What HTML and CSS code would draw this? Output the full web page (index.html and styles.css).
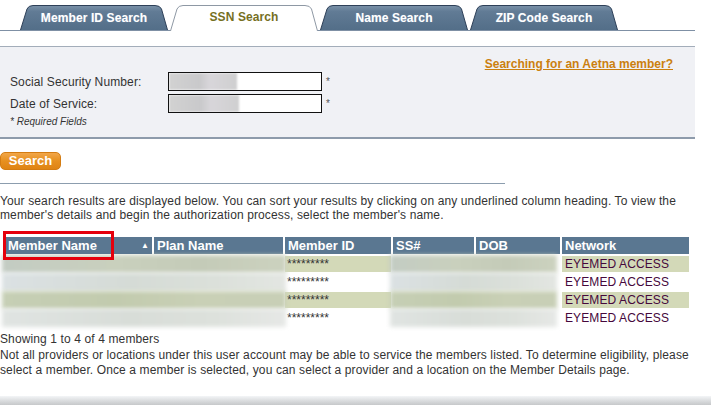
FILE: index.html
```html
<!DOCTYPE html>
<html>
<head>
<meta charset="utf-8">
<link rel="stylesheet" href="styles.css">
</head>
<body>
<div class="tabs">
  <div class="tab">
    <svg class="tab-bg" viewBox="0 0 148 25" preserveAspectRatio="none">
      <defs>
        <linearGradient id="tg" x1="0" y1="0" x2="0" y2="1">
          <stop offset="0" stop-color="#7a91a8"/>
          <stop offset="0.25" stop-color="#617b95"/>
          <stop offset="1" stop-color="#536e88"/>
        </linearGradient>
      </defs>
      <path d="M0.5 25 L7 4 Q8.5 0.5 13 0.5 L135 0.5 Q140 0.5 141.5 4 L147.5 25" fill="url(#tg)" stroke="#2e4058" stroke-width="1"/>
    </svg>
    <span class="tab-label">Member ID Search</span>
  </div>
  <div class="tab active">
    <svg class="tab-bg" viewBox="0 0 148 26" preserveAspectRatio="none">
      <path d="M0.5 26 L7 4 Q8.5 0.5 13 0.5 L135 0.5 Q140 0.5 141.5 4 L147.5 26" fill="#ffffff" stroke="#8e98a4" stroke-width="1"/>
    </svg>
    <span class="tab-label">SSN Search</span>
  </div>
  <div class="tab">
    <svg class="tab-bg" viewBox="0 0 148 25" preserveAspectRatio="none">
      <path d="M0.5 25 L7 4 Q8.5 0.5 13 0.5 L135 0.5 Q140 0.5 141.5 4 L147.5 25" fill="url(#tg)" stroke="#2e4058" stroke-width="1"/>
    </svg>
    <span class="tab-label">Name Search</span>
  </div>
  <div class="tab">
    <svg class="tab-bg" viewBox="0 0 148 25" preserveAspectRatio="none">
      <path d="M0.5 25 L7 4 Q8.5 0.5 13 0.5 L135 0.5 Q140 0.5 141.5 4 L147.5 25" fill="url(#tg)" stroke="#2e4058" stroke-width="1"/>
    </svg>
    <span class="tab-label">ZIP Code Search</span>
  </div>
</div>

<div class="panel">
  <div class="panel-link"><a href="#">Searching for an Aetna member?</a></div>
  <div class="form-row">
    <label class="form-label">Social Security Number:</label>
    <div class="field"><div class="field-redact"></div></div>
    <span class="req">*</span>
  </div>
  <div class="form-row">
    <label class="form-label">Date of Service:</label>
    <div class="field"><div class="field-redact wide"></div></div>
    <span class="req">*</span>
  </div>
  <div class="required-note">* Required Fields</div>
</div>

<div class="actions">
  <button class="btn-search">Search</button>
</div>
<div class="rule"></div>

<p class="intro">Your search results are displayed below. You can sort your results by clicking on any underlined column heading. To view the member's details and begin the authorization process, select the member's name.</p>

<table class="results">
  <thead>
    <tr>
      <th class="c1"><span class="hl-box"></span>Member Name<span class="sort">&#9650;</span></th>
      <th class="c2">Plan Name</th>
      <th class="c3">Member ID</th>
      <th class="c4">SS#</th>
      <th class="c5">DOB</th>
      <th class="c6">Network</th>
    </tr>
  </thead>
  <tbody>
    <tr class="alt r1">
      <td class="redact" colspan="2"><div class="smear"></div></td>
      <td class="mid">*********</td>
      <td class="redact" colspan="2"><div class="smear short"></div></td>
      <td class="net">EYEMED ACCESS</td>
    </tr>
    <tr class="r2">
      <td class="redact" colspan="2"><div class="smear"></div></td>
      <td class="mid">*********</td>
      <td class="redact" colspan="2"><div class="smear short"></div></td>
      <td class="net">EYEMED ACCESS</td>
    </tr>
    <tr class="alt r3">
      <td class="redact" colspan="2"><div class="smear"></div></td>
      <td class="mid">*********</td>
      <td class="redact" colspan="2"><div class="smear short"></div></td>
      <td class="net">EYEMED ACCESS</td>
    </tr>
    <tr class="r4">
      <td class="redact" colspan="2"><div class="smear"></div></td>
      <td class="mid">*********</td>
      <td class="redact" colspan="2"><div class="smear short"></div></td>
      <td class="net">EYEMED ACCESS</td>
    </tr>
  </tbody>
</table>

<div class="count">Showing 1 to 4 of 4 members</div>
<p class="note">Not all providers or locations under this user account may be able to service the members listed. To determine eligibility, please select a member. Once a member is selected, you can select a provider and a location on the Member Details page.</p>

<div class="footer-shade"></div>
</body>
</html>
```

FILE: styles.css
```css
html, body {
  margin: 0;
  padding: 0;
  background: #ffffff;
}
body {
  font-family: "Liberation Sans", Arial, sans-serif;
  font-size: 12px;
  color: #333333;
  overflow: hidden;
  letter-spacing: 0.12px;
}

/* Tabs */
.tabs {
  display: flex;
  align-items: flex-end;
  gap: 2px;
  width: 675px;
  height: 30px;
  padding-left: 20px;
  border-bottom: 1px solid #7f90a5;
}
.tab {
  position: relative;
  width: 148px;
  height: 25px;
  display: flex;
  align-items: center;
  justify-content: center;
}
.tab.active {
  height: 26px;
  margin-bottom: -1px;
}
.tab-bg {
  position: absolute;
  left: 0;
  top: 0;
  width: 100%;
  height: 100%;
}
.tab-label {
  position: relative;
  font-weight: bold;
  font-size: 12px;
  letter-spacing: 0.1px;
  color: #ffffff;
  text-shadow: 0 0 1px #8fa4ba;
  padding-top: 0;
}
.tab.active .tab-label {
  color: #76701f;
  text-shadow: none;
  padding-bottom: 2px;
}

/* Panel */
.panel {
  margin-top: 15px;
  width: 695px;
  box-sizing: border-box;
  background: #f0f1f5;
  border-top: 1px solid #a3adba;
  border-bottom: 2px solid #8e9bab;
  padding: 10px 0 9px 0;
}
.panel-link {
  text-align: right;
  padding-right: 22px;
  line-height: 14px;
  letter-spacing: 0;
}
.panel-link a {
  color: #cb800f;
  font-weight: bold;
  text-decoration: underline;
}
.form-row {
  display: flex;
  align-items: center;
  height: 19px;
  margin-top: 1px;
}
.form-row + .form-row {
  margin-top: 3px;
}
.form-label {
  width: 158px;
  padding-left: 10px;
}
.field {
  width: 154px;
  height: 19px;
  box-sizing: border-box;
  border: 1px solid #111111;
  background: #ffffff;
  overflow: hidden;
}
.field-redact {
  width: 68px;
  height: 100%;
  background: linear-gradient(90deg, #d2d2d2 0%, #c9c9cb 45%, #d8d6da 60%, #cfcfd0 100%);
  filter: blur(1px);
}
.field-redact.wide {
  width: 70px;
}
.req {
  font-size: 10px;
  color: #555555;
  margin-left: 4px;
}
.required-note {
  font-size: 10px;
  font-style: italic;
  padding-left: 10px;
  margin-top: 3px;
  line-height: 12px;
  letter-spacing: 0;
}

/* Search button */
.actions {
  margin-top: 13px;
  height: 18px;
}
.btn-search {
  display: block;
  width: 61px;
  height: 18px;
  margin: 0;
  padding: 0;
  border: 1px solid #d47c12;
  border-radius: 5px;
  background: linear-gradient(#f1a649 0%, #e7901f 50%, #df8414 100%);
  color: #ffffff;
  font-family: "Liberation Sans", Arial, sans-serif;
  font-weight: bold;
  font-size: 13px;
  line-height: 16px;
  text-align: center;
}
.rule {
  width: 505px;
  height: 1px;
  background: #8c9dae;
  margin-top: 13px;
}

.intro {
  margin: 10px 0 0 0;
  line-height: 14px;
  width: 705px;
}

/* Results table */
.results {
  margin-top: 13px;
  margin-left: 3px;
  border-collapse: separate;
  border-spacing: 2px;
  table-layout: fixed;
  width: 688px;
  letter-spacing: 0;
}
.results th {
  position: relative;
  height: 17px;
  padding: 0 3px;
  background: #5a7791;
  color: #ffffff;
  font-size: 13px;
  font-weight: bold;
  text-align: left;
  line-height: 17px;
  white-space: nowrap;
}
.results th.c1 { width: 141px; z-index: 5; }
.results th.c2 { width: 123px; }
.results th.c3 { width: 100px; }
.results th.c4 { width: 75px; }
.results th.c5 { width: 78px; }
.results th.c6 { width: 121px; }
.sort {
  float: right;
  font-size: 8px;
  line-height: 17px;
}
.hl-box {
  position: absolute;
  z-index: 5;
  left: -2px;
  top: -6px;
  width: 111px;
  height: 29px;
  box-sizing: border-box;
  border: 3px solid #e5000c;
}
.results td {
  height: 16px;
  padding: 0 3px;
  line-height: 16px;
  white-space: nowrap;
}
.results tr.alt td.mid,
.results tr.alt td.net {
  background: #d3d9b8;
}
.results td.mid {
  padding-left: 2px;
  font-size: 12px;
  color: #333;
}
.results td.net {
  color: #45083c;
  letter-spacing: 0.1px;
}
.results td.redact {
  padding: 0;
}
.smear {
  height: 18px;
  margin: -1px -3px;
  filter: blur(2px);
}
.smear.short {
  margin-right: 3px;
}
.r1 .smear { background: linear-gradient(90deg, #c3ccc3, #c9d0bd 40%, #c4cbb8 70%, #ccd2bf); }
.r2 .smear { background: linear-gradient(90deg, #dbe1e3, #d5dbd6 45%, #dbe0da 75%, #e3e6e2); }
.r3 .smear { background: linear-gradient(90deg, #c6cfb5, #c2cbae 40%, #c9d0b6 70%, #c8cfb6); }
.r4 .smear { background: linear-gradient(90deg, #e0e4e2, #d8ddd8 45%, #dde1dc 75%, #e6e8e6); }

.count {
  margin-top: 4px;
  line-height: 14px;
}
.note {
  margin: 2px 0 0 0;
  line-height: 15px;
  width: 705px;
}
.footer-shade {
  margin-top: 18px;
  height: 10px;
  background: linear-gradient(#f3f5f7, #d4d6d8 60%, #c2c4c6);
}
```
